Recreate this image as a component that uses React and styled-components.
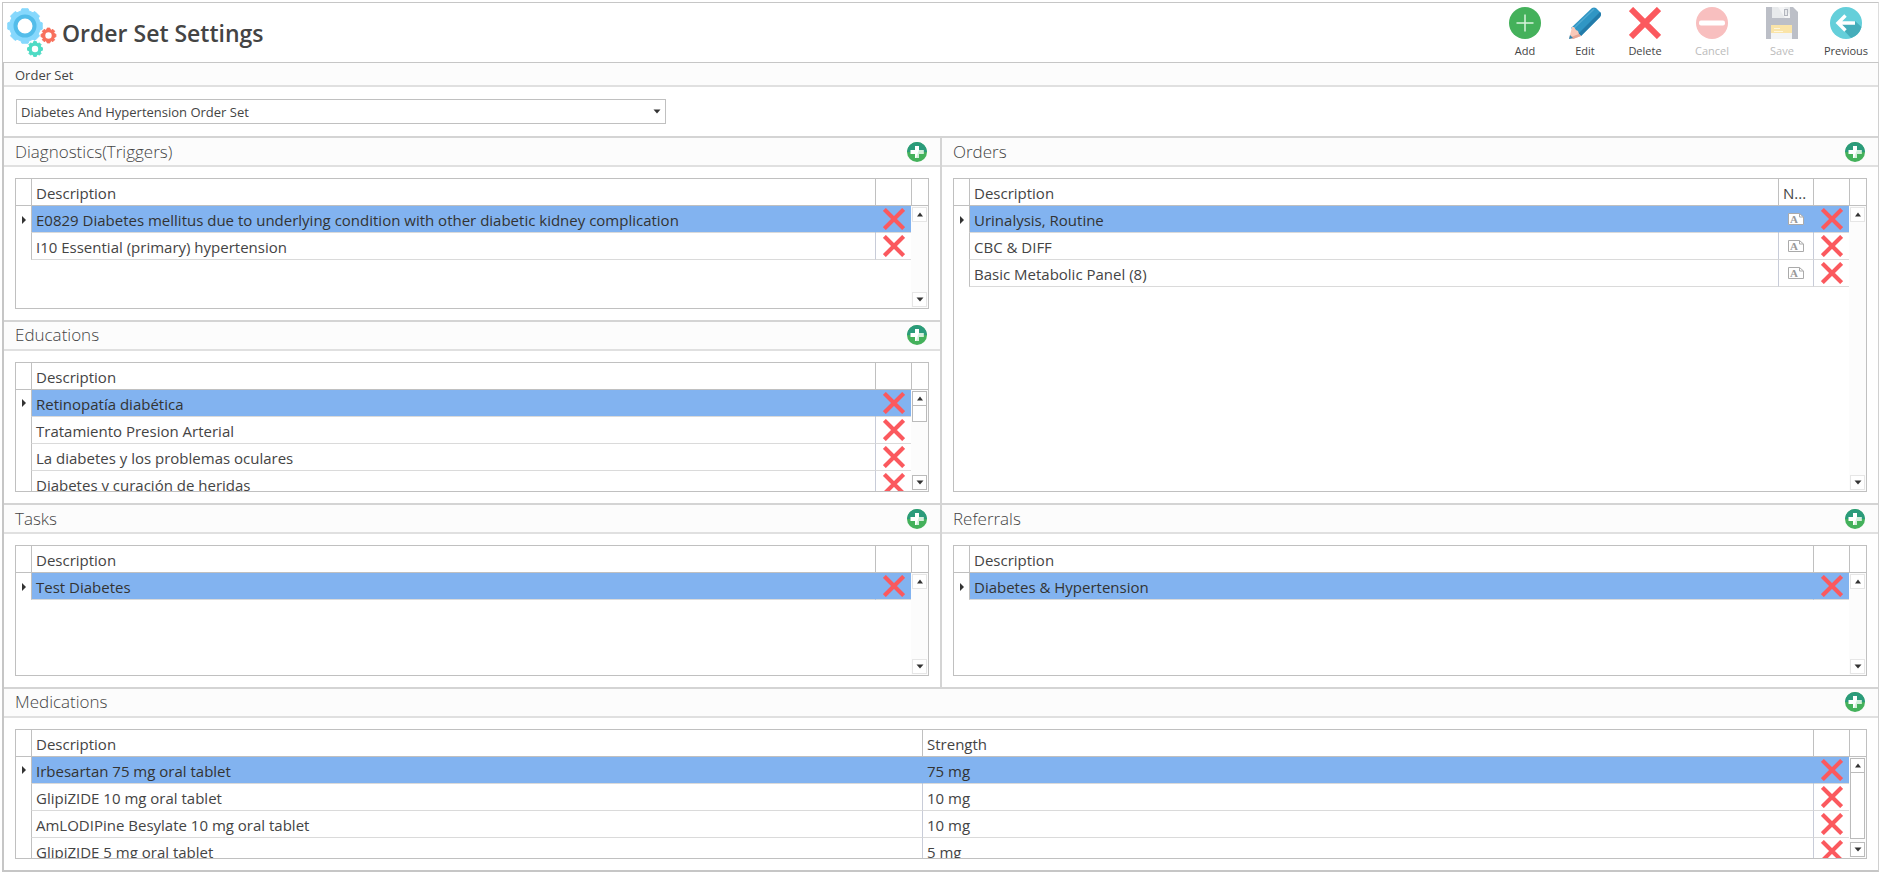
import React, { useState } from "react";
import styled, { createGlobalStyle, css } from "styled-components";

const diagnostics = [
  ["E0829 Diabetes mellitus due to underlying condition with other diabetic kidney complication"],
  ["I10 Essential (primary) hypertension"],
];

const educations = [
  ["Retinopatía diabética"],
  ["Tratamiento Presion Arterial"],
  ["La diabetes y los problemas oculares"],
  ["Diabetes y curación de heridas"],
];

const tasks = [["Test Diabetes"]];

const orders = [["Urinalysis, Routine"], ["CBC & DIFF"], ["Basic Metabolic Panel (8)"]];

const referrals = [["Diabetes & Hypertension"]];

const medications = [
  ["Irbesartan 75 mg oral tablet", "75 mg"],
  ["GlipiZIDE 10 mg oral tablet", "10 mg"],
  ["AmLODIPine Besylate 10 mg oral tablet", "10 mg"],
  ["GlipiZIDE 5 mg oral tablet", "5 mg"],
];

// closed outline of a cog with n flat teeth
function gearPath(cx, cy, outer, inner, n) {
  const step = (Math.PI * 2) / n;
  const pts = [];
  for (let i = 0; i < n; i++) {
    const a = i * step - Math.PI / 2;
    [[-0.32, inner], [-0.23, outer], [0.23, outer], [0.32, inner]].forEach(([k, r]) => {
      pts.push(`${(cx + r * Math.cos(a + k * step)).toFixed(2)} ${(cy + r * Math.sin(a + k * step)).toFixed(2)}`);
    });
  }
  return `M${pts.join("L")}Z`;
}

const GearsIcon = () => (
  <svg width="52" height="52" viewBox="0 0 52 52" aria-hidden="true">
    <path d={gearPath(19, 19, 17.5, 15.5, 8)} fill="#86d8fd" stroke="#86d8fd" strokeLinejoin="round" />
    <circle cx="19" cy="19" r="9.5" fill="#fff" stroke="#53bdea" strokeWidth="4" />
    <path d={gearPath(42.5, 28.5, 7.5, 6.2, 8)} fill="#f8705c" stroke="#f8705c" strokeLinejoin="round" />
    <circle cx="42.5" cy="28.5" r="3.2" fill="#fff" />
    <path d={gearPath(29, 42, 7.5, 6.2, 8)} fill="#4edbc4" stroke="#4edbc4" strokeLinejoin="round" />
    <circle cx="29" cy="42" r="3.2" fill="#fff" />
  </svg>
);

const AddIcon = () => (
  <svg width="32" height="32" viewBox="0 0 32 32" aria-hidden="true">
    <circle cx="16" cy="16" r="16" fill="#44b15b" />
    <path d="M16 7.5v17M7.5 16h17" stroke="#d9f3de" strokeWidth="1.5" />
  </svg>
);

const EditIcon = () => (
  <svg width="32" height="32" viewBox="0 0 32 32" aria-hidden="true">
    <path d="M2 21L23 1Q25 0 27 1L31 5Q33 7 31 10L12 29Z" fill="#3096c4" />
    <path d="M9 27L31 5Q33 7 31 10L12 29Z" fill="#237ba9" />
    <path d="M4 22L25 2" stroke="#4fa9d1" strokeWidth="1.5" />
    <path d="M3 20L5 20L7 23L9 24L10 27L12 29L4 32L0 32Z" fill="#f9c9b9" />
    <path d="M10 27L12 29L4 32L2 30Z" fill="#e6a797" />
    <path d="M1 28L4 31L0 32Z" fill="#2a86b4" />
  </svg>
);

const CrossIcon = ({ size }) => (
  <svg width={size} height={size} viewBox="0 0 32 32" aria-hidden="true">
    <path d="M2 2L30 30M30 2L2 30" stroke="#fb595e" strokeWidth="6" />
  </svg>
);

const CancelIcon = () => (
  <svg width="32" height="32" viewBox="0 0 32 32" aria-hidden="true">
    <circle cx="16" cy="16" r="16" fill="#f8bfbf" />
    <rect x="3" y="13.5" width="26" height="5" rx="2" fill="#fff" />
  </svg>
);

const SaveIcon = () => (
  <svg width="32" height="32" viewBox="0 0 32 32" aria-hidden="true">
    <path d="M0 0H27L32 5V32H0Z" fill="#bcbfc7" />
    <path d="M6 0H24V11H6Z" fill="#e8eaec" />
    <path d="M12 0H18L24 8V11H19Z" fill="#f4f5f6" />
    <rect x="18.5" y="2.5" width="3" height="6" fill="#e8eaec" stroke="#b3b6be" />
    <path d="M5 18H26V26H5Z" fill="#fae4a8" />
    <path d="M5 26H26V32H5Z" fill="#f3f4f5" />
    <path d="M8 21.5H14M8 24.5H17" stroke="#fff6dc" />
  </svg>
);

const PreviousIcon = () => (
  <svg width="32" height="32" viewBox="0 0 32 32" aria-hidden="true">
    <circle cx="16" cy="16" r="16" fill="#64cfda" />
    <path d="M8 17L21 31A16 16 0 0 0 31.5 20L25 14Z" fill="#45adba" />
    <path d="M25 16H9M15.5 8.5L8 16L15.5 23.5" fill="none" stroke="#fff" strokeWidth="3.4" />
  </svg>
);

const PlusBadge = () => (
  <svg width="20" height="20" viewBox="0 0 20 20" aria-hidden="true">
    <circle cx="10" cy="10" r="10" fill="#44b15b" />
    <path d="M0 10A10 10 0 0 1 20 10Z" fill="#2b9b7b" />
    <path d="M8 4H12V8H16.500V12H12V16H8V12H3.500V8H8Z" fill="#fff" />
    <path d="M12 8H16.500V12H12V16H9Z" fill="#d3efdb" />
  </svg>
);

const NoteIcon = () => (
  <svg width="16" height="12" viewBox="0 0 16 12" aria-hidden="true">
    <path d="M.5 .5H11.500L15.500 4V11.500H.5Z" fill="#fff" stroke="#aaa" />
    <path d="M11.500 .5V4H15.500" fill="none" stroke="#aaa" />
    <text x="2" y="10" fontFamily="Liberation Serif, serif" fontWeight="700" fontSize="11" fill="#999">A</text>
  </svg>
);

const Arrow = ({ dir }) => (
  <svg width="8" height="5" viewBox="0 0 8 5" aria-hidden="true">
    <path d={dir === "up" ? "M1 4.500L4 .5L7 4.500Z" : "M.5 .5H7.500L4 4.500Z"} fill="#333" />
  </svg>
);

const RowMarker = () => (
  <svg width="4" height="8" viewBox="0 0 4 8" aria-hidden="true">
    <path d="M0 0L4 4L0 8Z" fill="#333" />
  </svg>
);

function DataGrid({ title, rows, columns = ["Description"], notes, thumb }) {
  const [current, setCurrent] = useState(0);

  return (
    <GridBox>
      <TableArea>
        <Table aria-label={title}>
          <colgroup>
            <Col $w={15} />
            {columns.map((c) => (
              <col key={c} />
            ))}
            {notes && <Col $w={35} />}
            <Col $w={36} />
          </colgroup>
          <thead>
            <tr>
              <Th />
              {columns.map((c) => (
                <Th key={c}>{c}</Th>
              ))}
              {notes && <Th>N...</Th>}
              <Th />
            </tr>
          </thead>
          <tbody>
            {rows.map((row, index) => (
              <Tr key={index} $selected={index === current} onClick={() => setCurrent(index)}>
                <Marker>{index === current && <RowMarker />}</Marker>
                {row.map((text, i) => (
                  <Td key={i}>{text}</Td>
                ))}
                {notes && (
                  <IconTd>
                    <IconButton aria-label="Note">
                      <NoteIcon />
                    </IconButton>
                  </IconTd>
                )}
                <IconTd>
                  <IconButton aria-label={`Delete ${row[0]}`}>
                    <CrossIcon size={22} />
                  </IconButton>
                </IconTd>
              </Tr>
            ))}
          </tbody>
        </Table>
      </TableArea>
      <ScrollColumn>
        <ScrollHead />
        <Track>
          <ScrollButton $active={!!thumb} aria-label="Scroll up">
            <Arrow dir="up" />
          </ScrollButton>
          <ThumbArea>{thumb && <Thumb $size={thumb} />}</ThumbArea>
          <ScrollButton $active={!!thumb} aria-label="Scroll down">
            <Arrow dir="down" />
          </ScrollButton>
        </Track>
      </ScrollColumn>
    </GridBox>
  );
}

function Section({ title, area, ...grid }) {
  return (
    <Panel $area={area}>
      <PanelHead>
        <h2>{title}</h2>
        <IconButton aria-label={`Add to ${title}`}>
          <PlusBadge />
        </IconButton>
      </PanelHead>
      <PanelBody>
        <DataGrid title={title} {...grid} />
      </PanelBody>
    </Panel>
  );
}

function App() {
  return (
    <>
      <GlobalStyle />
      <Page>
        <Header>
          <Brand>
            <GearsIcon />
            <h1>Order Set Settings</h1>
          </Brand>
          <Toolbar>
            <ToolButton $w={60}><AddIcon /><span>Add</span></ToolButton>
            <ToolButton $w={60}><EditIcon /><span>Edit</span></ToolButton>
            <ToolButton $w={60}><CrossIcon size={32} /><span>Delete</span></ToolButton>
            <ToolButton $w={74} disabled><CancelIcon /><span>Cancel</span></ToolButton>
            <ToolButton $w={66} disabled><SaveIcon /><span>Save</span></ToolButton>
            <ToolButton $w={62}><PreviousIcon /><span>Previous</span></ToolButton>
          </Toolbar>
        </Header>
        <Content>
          <OrderSetHead htmlFor="order-set">Order Set</OrderSetHead>
          <OrderSetBody>
            <SelectWrap>
              <select id="order-set">
                <option>Diabetes And Hypertension Order Set</option>
              </select>
              <Arrow dir="down" />
            </SelectWrap>
          </OrderSetBody>
          <Panels>
            <Section title="Diagnostics(Triggers)" area="diag" rows={diagnostics} />
            <Section title="Educations" area="edu" rows={educations} thumb="16px" />
            <Section title="Tasks" area="tasks" rows={tasks} />
            <Section title="Orders" area="orders" rows={orders} notes />
            <Section title="Referrals" area="refs" rows={referrals} />
            <Section
              title="Medications"
              area="meds"
              rows={medications}
              columns={["Description", "Strength"]}
              thumb="95%"
            />
          </Panels>
        </Content>
      </Page>
    </>
  );
}

const GlobalStyle = createGlobalStyle`
  *{
    box-sizing: border-box;
  }
  body{
    margin: 0;
    background-color: #fff;
    color: #444;
    font-family: "Open Sans", "Noto Sans", sans-serif;
  }
  button, select{
    font-family: inherit;
    color: inherit;
  }
  svg{
    display: block;
    flex-shrink: 0;
  }
`

const Page = styled.main`
  display: flex;
  flex-direction: column;
  height: 100vh;
  min-height: 760px;
  padding: 2px 4px 3px 2px;
`

const Header = styled.header`
  display: flex;
  justify-content: space-between;
  height: 60px;
  border: 1px solid #c6c6c6;
  border-right-color: #ddd;
  border-bottom: none;
`

const Brand = styled.div`
  display: flex;
  align-items: center;
  gap: 4px;
  padding-left: 3px;
  h1{
    margin: 0;
    font-size: 23px;
    font-weight: 600;
    line-height: 32px;
  }
`

const Toolbar = styled.div`
  display: flex;
  padding-right: 1px;
`

const ToolButton = styled.button`
  display: flex;
  flex-direction: column;
  align-items: center;
  gap: 4px;
  width: ${({ $w }) => $w}px;
  padding: 4px 0 0;
  border: none;
  background: none;
  font-size: 11px;
  line-height: 16px;
  cursor: pointer;
  &:disabled{
    color: #bbb;
    cursor: default;
  }
`

const Content = styled.div`
  flex: 1;
  min-height: 0;
  display: flex;
  flex-direction: column;
  border: 2px solid #c6c6c6;
  border-top-width: 1px;
  border-right: 1px solid #d0d0d0;
`

const OrderSetHead = styled.label`
  height: 24px;
  padding-left: 11px;
  border-bottom: 2px solid #e0e0e0;
  background-color: #fcfcfc;
  font-size: 13px;
  line-height: 24px;
`

const OrderSetBody = styled.div`
  padding: 12px;
`

const SelectWrap = styled.div`
  position: relative;
  width: 650px;
  max-width: 100%;
  select{
    display: block;
    appearance: none;
    width: 100%;
    height: 25px;
    padding: 0 20px 0 4px;
    border: 1px solid #c0c0c0;
    border-radius: 0;
    background-color: #fff;
    font-size: 13px;
  }
  svg{
    position: absolute;
    right: 5px;
    top: 10px;
    pointer-events: none;
  }
`

const Panels = styled.div`
  flex: 1;
  min-height: 0;
  display: grid;
  grid-template-columns: calc(50% - 1px) minmax(0, 1fr);
  grid-template-rows: repeat(4, minmax(0, 1fr));
  grid-template-areas:
    "diag orders"
    "edu orders"
    "tasks refs"
    "meds meds";
`

const Panel = styled.section`
  grid-area: ${({ $area }) => $area};
  display: flex;
  flex-direction: column;
  min-height: 0;
  border-top: 2px solid #d4d4d4;
  ${({ $area }) => ($area === "orders" || $area === "refs") && css`
    border-left: 2px solid #d4d4d4;
  `}
`

const PanelHead = styled.div`
  display: flex;
  flex-shrink: 0;
  align-items: center;
  justify-content: space-between;
  height: 29px;
  padding: 0 13px 0 11px;
  border-bottom: 2px solid #e0e0e0;
  background-color: #fcfcfc;
  h2{
    margin: 0;
    font-size: 17px;
    font-weight: 300;
    line-height: 26px;
  }
`

const PanelBody = styled.div`
  flex: 1;
  min-height: 0;
  display: flex;
  padding: 11px;
`

const IconButton = styled.button`
  display: flex;
  align-items: center;
  justify-content: center;
  margin: 0 auto;
  padding: 0;
  border: none;
  background: none;
  cursor: pointer;
  ${PanelHead} &{
    margin: 0;
  }
`

const GridBox = styled.div`
  flex: 1;
  min-width: 0;
  display: flex;
  border: 1px solid #c0c0c0;
`

const TableArea = styled.div`
  flex: 1;
  min-width: 0;
  overflow: hidden;
`

const Table = styled.table`
  width: 100%;
  table-layout: fixed;
  border-collapse: separate;
  border-spacing: 0;
  font-size: 15px;
`

const Col = styled.col`
  width: ${({ $w }) => $w}px;
`

const cell = css`
  height: 27px;
  padding: 2px 0 0 4px;
  line-height: 24px;
  text-align: left;
  white-space: nowrap;
  overflow: hidden;
`

const Th = styled.th`
  ${cell}
  border-bottom: 1px solid #c0c0c0;
  font-weight: 400;
  & + &{
    border-left: 1px solid #c0c0c0;
  }
`

const Td = styled.td`
  ${cell}
  border-bottom: 1px solid #dadada;
  border-left: 1px solid #c8ccd8;
`

const IconTd = styled(Td)`
  padding: 0;
`

const Marker = styled.td`
  padding: 0 0 0 6px;
`

const Tr = styled.tr`
  ${({ $selected }) => $selected && css`
    color: #333;
    ${Td}{
      background-color: #82b3f0;
      border-left-color: #82b3f0;
    }
  `}
  ${Marker} + ${Td}{
    border-left-color: #c0c0c0;
  }
`

const ScrollColumn = styled.div`
  display: flex;
  flex-direction: column;
  width: 17px;
`

const ScrollHead = styled.div`
  height: 27px;
  border-left: 1px solid #c0c0c0;
  border-bottom: 1px solid #c0c0c0;
`

const Track = styled.div`
  flex: 1;
  min-height: 0;
  display: flex;
  flex-direction: column;
  padding: 1px;
  background-color: #fcfcfc;
`

const ScrollButton = styled.button`
  display: flex;
  flex-shrink: 0;
  align-items: center;
  justify-content: center;
  width: 15px;
  height: 15px;
  padding: 0;
  border: 1px solid ${({ $active }) => ($active ? "#bbb" : "#e6e6e6")};
  background-color: #fff;
`

const ThumbArea = styled.div`
  flex: 1;
  min-height: 0;
`

const Thumb = styled.div`
  height: ${({ $size }) => $size};
  border: 1px solid #bbb;
  border-top: none;
  background-color: #fff;
`

export default App
